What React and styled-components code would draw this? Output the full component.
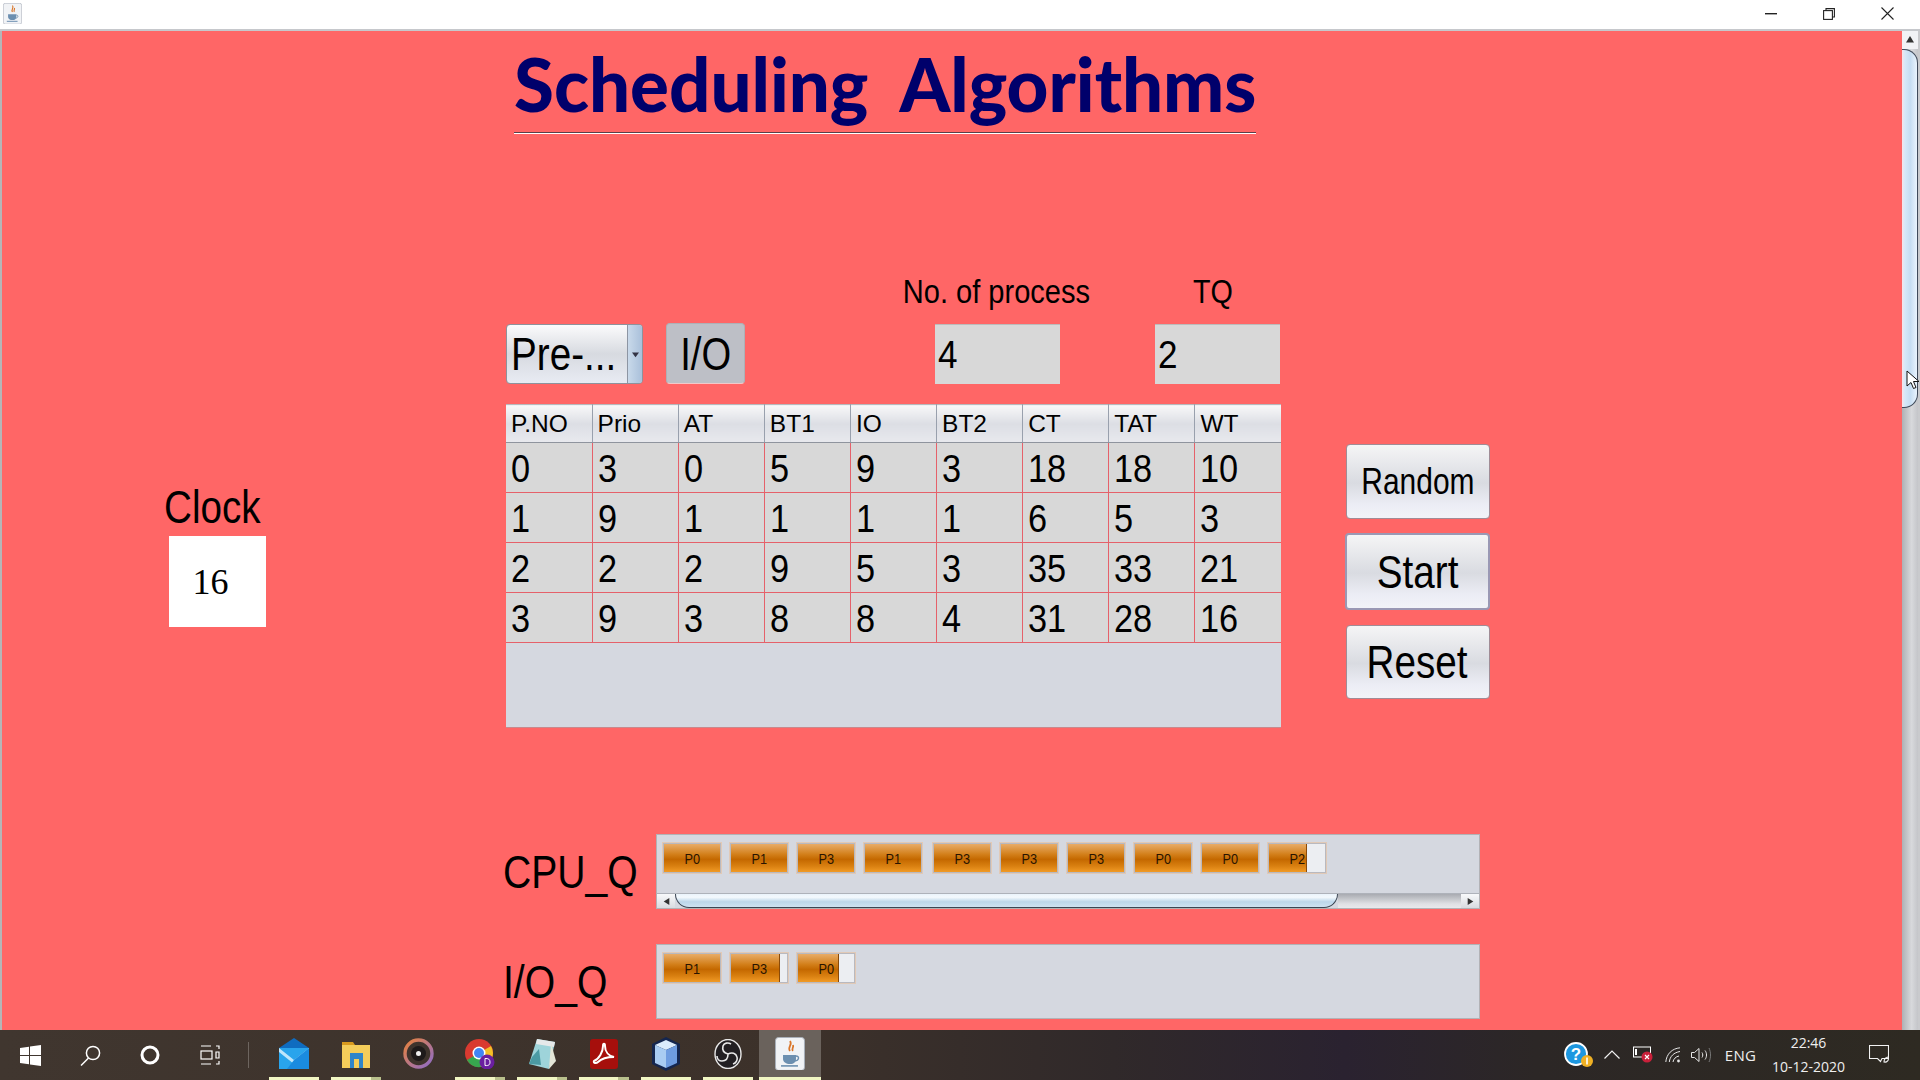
import React from "react";
import styled, { createGlobalStyle } from "styled-components";

const Global = createGlobalStyle`
  html, body { margin: 0; padding: 0; width: 1920px; height: 1080px; overflow: hidden; background: #ff6666; }
  * { box-sizing: border-box; }
  body { font-family: "Liberation Sans", Arial, sans-serif; color: #000; }
`;

const Window = styled.div`
  width: 1920px; height: 1080px; display: flex; flex-direction: column;
`;
const TitleBar = styled.header`
  height: 31px; flex: none; background: #fff; border-bottom: 2px solid #c6c8cc;
  display: flex; align-items: center; padding: 0 0 2px 3px;
`;
const WindowControls = styled.div`
  margin-left: auto; display: flex; align-items: center; padding-right: 26px; gap: 46px;
`;
const Body = styled.div`
  flex: 1; display: flex; min-height: 0; position: relative; border-left: 2px solid #b5b5b8; border-right: 2px solid #c9cacd;
`;
const Canvas = styled.main`
  flex: 1; background: #ff6666; display: flex; flex-direction: column; min-width: 0;
`;

const VBar = styled.div`
  width: 16px; flex: none; display: flex; flex-direction: column;
  background: linear-gradient(90deg, #aeb0b5, #d8d9dc 60%, #c4c5c9);
`;
const VBtn = styled.div`
  height: 18px; background: #f1f2f5; display: flex; align-items: center; justify-content: center;
`;
const VThumb = styled.div`
  height: 359px; border-radius: 0 14px 14px 0; border: 1px solid #3f4a5a; border-left: none;
  background: linear-gradient(90deg, #f7e4ea 0, #d6e8f8 20%, #c6ddf2 55%, #eaf4fd 100%);
`;
const Cursor = styled.svg`
  position: absolute; right: -2px; top: 339px;
`;

const TitleBlock = styled.div`
  margin-left: 512px; width: 742px; height: 103px; padding-top: 10px; flex: none;
  display: flex; flex-direction: column; justify-content: space-between;
`;
const Heading = styled.h1`
  margin: 0; font-family: "Comic Sans MS", Lato, "Open Sans", sans-serif; font-weight: 900; font-size: 74px;
  line-height: 86px; color: #00006b; white-space: pre; word-spacing: -0.5px;
  transform: scaleX(${p => p.$x}); transform-origin: left center;
`;
const TitleRule = styled.div`
  height: 2px; background: linear-gradient(#5a3f48 50%, #fff 50%);
`;

const Stretch = styled.span`
  display: inline-block; white-space: nowrap; font-size: ${p => p.$size}px;
  transform: scaleX(${p => p.$x}); transform-origin: ${p => p.$origin || "left"} center;
`;

const Workspace = styled.section`
  margin-top: 143px; display: flex; flex: none;
`;
const ClockColumn = styled.div`
  width: 504px; flex: none; padding: 205px 0 0 162px;
`;
const ClockLabel = styled.div`
  height: 54px; line-height: 50px;
`;
const ClockFace = styled.div`
  margin-left: 5px; width: 97px; height: 91px; background: #fff; display: flex; align-items: center; justify-content: center;
  padding-right: 14px; font-family: "Liberation Serif", serif; font-size: 36px;
`;
const CenterColumn = styled.div`
  width: 775px; flex: none; display: flex; flex-direction: column;
`;
const Controls = styled.div`
  display: flex; align-items: flex-end; height: 107px;
`;
const Combo = styled.div`
  width: 137px; height: 60px; border-radius: 4px; border: 1px solid #8d929c; display: flex; overflow: hidden;
  background: linear-gradient(#fbfbfc 0, #d7dae0 50%, #e8ebf3 100%);
`;
const ComboValue = styled.div`
  width: 120px; flex: none; padding-left: 4px; line-height: 58px;
`;
const ComboArrow = styled.div`
  width: 15px; flex: none; border-left: 1px solid #8d95a3; display: flex; align-items: center; justify-content: center;
  background: linear-gradient(90deg, #c9d9ea, #a9c0da);
`;
const ToggleButton = styled.div`
  margin-left: 23px; width: 79px; height: 61px; border-radius: 4px; background: #bdbfc6; border: 1px solid #aeb0b6;
  border-bottom-color: #f3c8c8; display: flex; align-items: center; justify-content: center;
`;
const FieldGroup = styled.div`
  width: 125px; margin-left: ${p => p.$gap}px; display: flex; flex-direction: column; align-items: center;
`;
const FieldLabel = styled.div`
  height: 47px; line-height: 30px; white-space: nowrap; padding-right: ${p => p.$nudge || 0}px;
`;
const Field = styled.div`
  width: 125px; height: 60px; background: #d8d8d8; border-top: 1px solid #bbb; padding-left: 3px; line-height: 60px;
`;

const TableWrap = styled.div`
  margin-top: 20px; height: 324px; background: #d5d8e0; border-bottom: 1px solid #c9888c;
`;
const Grid = styled.table`
  width: 775px; table-layout: fixed; border-collapse: collapse;
`;
const Head = styled.th`
  height: 38px; padding: 0 0 0 5px; text-align: left; font-weight: 400; font-size: 24.5px; border-right: 1px solid #99a0ad;
  border-bottom: 1px solid #8f949e; border-top: 1px solid #b7b9bd;
  background: linear-gradient(#f8f8f9 0, #dcdee4 50%, #e8e9ee 100%);
  &:last-child { border-right: none; }
`;
const Cell = styled.td`
  height: 50px; padding: 2px 0 0 5px; background: #d8d8d8; border-right: 1px solid #e5616a; border-bottom: 1px solid #e5616a;
  &:last-child { border-right: none; }
`;

const ButtonColumn = styled.div`
  margin-left: 64px; width: 145px; padding-top: 167px; display: flex; flex-direction: column; align-items: center;
`;
const Action = styled.div`
  width: ${p => (p.$focus ? 145 : 144)}px; height: ${p => p.$h}px; margin-top: ${p => p.$top}px; border-radius: 4px;
  border: ${p => (p.$focus ? "2px solid #9a98b4" : "1px solid #a08c96")};
  background: linear-gradient(#f5f5f6 0, #d9dbe1 52%, #ecedf5 82%, #f2f3f8 100%);
  display: flex; align-items: center; justify-content: center;
`;

const QueueRow = styled.section`
  display: flex; align-items: center; margin: ${p => p.$top}px 0 0 503px; flex: none;
`;
const QueueLabel = styled.div`
  width: 151px; flex: none; margin-left: -2px; margin-right: 2px;
`;
const QueuePanel = styled.div`
  width: 824px; height: 75px; background: #d5d8e0; border: 1px solid #b2b2b6; display: flex; flex-direction: column;
`;
const ChipRow = styled.div`
  flex: 1; display: flex; gap: 9px; padding: 8px 0 0 6px;
`;
const Chip = styled.div`
  position: relative; width: 58px; height: 30px; margin-left: ${p => p.$shift || 0}px;
  background: #eceef2; border: 1px solid #b9b9bf; box-shadow: 0 0 0 1px rgba(240,185,130,.45);
  display: flex; align-items: center; justify-content: center; overflow: hidden;
`;
const ChipFill = styled.div`
  position: absolute; inset: -1px auto -1px -1px;
  border: 1px solid #8a4a08;
  background: linear-gradient(#e8ac68 0, #d27e18 38%, #c46800 55%, #d87f10 78%, #f19a25 100%);
`;
const ChipText = styled.span`
  position: relative; font-size: 15px; color: #2a1400; display: inline-block; transform: scaleX(.85);
`;
const HBar = styled.div`
  height: 15px; display: flex; flex: none; border-top: 1px solid #aeb2ba;
`;
const HBtn = styled.div`
  width: 18px; flex: none; background: linear-gradient(#f8f9fb, #d8dbe0); display: flex; align-items: center; justify-content: center;
`;
const HThumb = styled.div`
  width: 663px; flex: none; border-radius: 0 0 14px 14px; border: 1px solid #3b4653; border-top: none;
  background: linear-gradient(#eaf3fb 0, #f4f9fd 25%, #bcd6ea 60%, #cfe2f1 100%);
`;
const HTrack = styled.div`
  flex: 1; background: linear-gradient(#a9abb1, #dfe0e4 70%, #e8e9ec);
`;

const Taskbar = styled.footer`
  height: 50px; flex: none; display: flex; align-items: stretch; color: #f2f2f2;
  background: linear-gradient(90deg, #40362f 0, #3c312a 42%, #30292a 58%, #2a2230 70%, #2c2726 80%, #2e2a22 100%);
`;
const SystemSlot = styled.div`
  width: 60px; flex: none; display: flex; align-items: center; justify-content: center;
`;
const Divider = styled.div`
  width: 1px; height: 26px; margin: 12px 14px 0 8px; background: #6d655f; flex: none;
`;
const AppSlot = styled.div`
  width: 62px; flex: none; display: flex; flex-direction: column; background: ${p => (p.$active ? "#6a625c" : "transparent")};
`;
const AppIcon = styled.div`
  flex: 1; display: flex; align-items: center; justify-content: center;
`;
const Indicator = styled.div`
  height: 3px; margin: ${p => (p.$active ? "0" : "0 6px")};
  background: ${p => (p.$open
    ? p.$stacked ? "linear-gradient(90deg, #f1f6c3 79%, #b9c08c 79%)" : "#f1f6c3"
    : "transparent")};
`;
const Tray = styled.div`
  margin-left: auto; padding: 0 31px 1px 0; display: flex; align-items: center;
`;
const TrayItem = styled.div`
  margin-left: ${p => p.$gap}px; display: flex; align-items: center; font-family: "Open Sans", sans-serif;
`;
const TrayText = styled.span`
  font-size: 15px; letter-spacing: .2px; color: #efefef; white-space: nowrap;
`;
const DateTime = styled.div`
  width: 75px; font-family: "Open Sans", sans-serif; font-size: 14px; line-height: 24px; text-align: center; color: #efefef; white-space: nowrap;
`;

const CoffeeTile = ({ size = 18 }) => (
  <svg width={size} height={size * 1.13} viewBox="0 0 30 34">
    <rect x="0.5" y="0.5" width="29" height="33" rx="3" fill="#f1f3f6" stroke="#a9b0ba" />
    <path d="M15 4c3 4-3 6 0 10M18 8c1 3-2 4 0 6" fill="none" stroke="#d9762a" strokeWidth="1.8" />
    <path d="M8 18h13v4c0 3-2 5-6 5s-7-2-7-5z" fill="#6c8fb0" />
    <path d="M21 19c4 0 3 5-1 5" fill="none" stroke="#6c8fb0" strokeWidth="1.4" />
    <path d="M6 29h17" stroke="#6c8fb0" strokeWidth="1.6" />
  </svg>
);
const Triangle = ({ dir, size = 5, color = "#333" }) => {
  const pts = { up: "0,8 5,0 10,8", down: "0,2 5,9 10,2", left: "9,0 9,10 1,5", right: "1,0 1,10 9,5" }[dir];
  return <svg width={size * 2} height={size * 2} viewBox="0 0 10 10"><polygon points={pts} fill={color} /></svg>;
};
const Minimize = () => <svg width="12" height="2"><rect width="12" height="1.4" fill="#222" /></svg>;
const Restore = () => (
  <svg width="12" height="12" viewBox="0 0 12 12" fill="none" stroke="#222" strokeWidth="1.1">
    <rect x="0.6" y="2.6" width="8.8" height="8.8" /><path d="M3 2.6V.6h8.4v8.4H9.4" />
  </svg>
);
const CloseX = () => (
  <svg width="13" height="13" viewBox="0 0 13 13" stroke="#222" strokeWidth="1.1"><path d="M.5.5l12 12M12.5.5l-12 12" /></svg>
);
const Win = () => (
  <svg width="21" height="21" viewBox="0 0 21 21" fill="#fff">
    <polygon points="0,3 9,1.7 9,10 0,10" /><polygon points="10,1.5 21,0 21,10 10,10" />
    <polygon points="0,11 9,11 9,19.3 0,18" /><polygon points="10,11 21,11 21,21 10,19.5" />
  </svg>
);
const Search = () => (
  <svg width="21" height="21" viewBox="0 0 21 21" fill="none" stroke="#fff" strokeWidth="1.5">
    <circle cx="13" cy="8" r="6.6" /><path d="M8.5 13L1 20.5" />
  </svg>
);
const Cortana = () => <svg width="20" height="20"><circle cx="10" cy="10" r="8" fill="none" stroke="#fff" strokeWidth="3" /></svg>;
const TaskView = () => (
  <svg width="20" height="20" viewBox="0 0 20 20" fill="none" stroke="#fff" strokeWidth="1.2">
    <path d="M1 1h10M1 19h10" /><rect x="1" y="6" width="11" height="8" />
    <path d="M16 1h3v3M16 19h3v-3M16 7h3v6h-3z" />
  </svg>
);
const Mail = () => (
  <svg width="30" height="31" viewBox="0 0 30 31">
    <polygon points="0,10 15,0 30,10 15,20" fill="#0f6cc0" />
    <rect x="0" y="10" width="30" height="21" fill="#29a4ec" />
    <polygon points="0,10 15,22 30,10 30,14 15,26 0,14" fill="#bfe6fb" />
    <polygon points="15,22 30,10 30,31 8,31" fill="#1a8be0" />
  </svg>
);
const Folder = () => (
  <svg width="28" height="30" viewBox="0 0 28 30">
    <path d="M0 3h11l2 3H0z" fill="#d89a1e" /><rect y="6" width="28" height="23" fill="#f4cd5a" />
    <rect x="8" y="14" width="13" height="15" fill="#2f85c9" /><rect x="12" y="20" width="5" height="9" fill="#f4cd5a" />
  </svg>
);
const Groove = () => (
  <svg width="31" height="31" viewBox="0 0 31 31">
    <defs><linearGradient id="gr" x1="0" y1="0" x2="1" y2="1"><stop offset="0" stopColor="#e8823c" /><stop offset="1" stopColor="#8d6cc9" /></linearGradient></defs>
    <circle cx="15.5" cy="15.5" r="13.5" fill="none" stroke="url(#gr)" strokeWidth="3.4" />
    <circle cx="15.5" cy="15.5" r="7.5" fill="#1e1a1a" /><circle cx="15.5" cy="15.5" r="2.5" fill="#eee" />
  </svg>
);
const Chrome = () => (
  <svg width="30" height="30" viewBox="0 0 30 30">
    <circle cx="14" cy="14" r="14" fill="#d93a30" />
    <path d="M14 14L2 21a14 14 0 0 0 14 7z" fill="#37a64e" />
    <path d="M14 14l12-7a14 14 0 0 1-10 21z" fill="#f4c026" />
    <circle cx="14" cy="14" r="6.5" fill="#fff" /><circle cx="14" cy="14" r="5" fill="#4285f4" />
    <circle cx="22" cy="23" r="7.5" fill="#6a1fa0" />
    <path d="M20 19.5v7c4 .4 5-1 5-3.5s-1.5-3.800-5-3.500z" fill="none" stroke="#fff" strokeWidth="1" />
  </svg>
);
const Notes = () => (
  <svg width="27" height="30" viewBox="0 0 27 30">
    <polygon points="8,0 26,3 20,30 0,25" fill="#9ed4da" />
    <polygon points="8,0 26,3 25,8 7,5" fill="#e6e9ea" />
    <polygon points="22,4 27,22 20,30" fill="#e4e6d8" />
    <polygon points="3,18 10,10 12,26 0,25" fill="#4b9aa3" />
  </svg>
);
const Acrobat = () => (
  <svg width="28" height="30" viewBox="0 0 28 30">
    <rect width="28" height="30" rx="3" fill="#a60f0c" />
    <path d="M4 22c5-2 9-9 9-15 0-3 2-3 2 0 0 6 4 10 9 11-5 0-12 1-16 5-2 2-5 1-4-1z" fill="none" stroke="#fff" strokeWidth="2" />
  </svg>
);
const Cube = () => (
  <svg width="28" height="34" viewBox="0 0 28 34">
    <polygon points="14,0 28,7 28,27 14,34 0,27 0,7" fill="#14264f" />
    <polygon points="14,3 25,8 14,13 3,8" fill="#dcecfb" />
    <polygon points="3,8 14,13 14,31 3,26" fill="#a9ccf2" />
    <polygon points="25,8 14,13 14,31 25,26" fill="#6e9ce0" />
  </svg>
);
const Obs = () => (
  <svg width="28" height="30" viewBox="0 0 28 30" fill="none" stroke="#e8e8e8">
    <ellipse cx="14" cy="15" rx="13" ry="14.5" fill="#221f22" strokeWidth="1.4" />
    <path d="M14 15c-4-1-6-4-5-8 1-3 5-4 8-2M14 15c4-2 8-1 9 3 1 3-1 6-4 7M14 15c0 4-2 7-6 7-3 0-5-2-5-5" strokeWidth="1.6" />
  </svg>
);
const Help = () => (
  <svg width="29" height="26" viewBox="0 0 29 26">
    <circle cx="12" cy="12" r="11" fill="#1d97e0" stroke="#fff" strokeWidth="1.8" />
    <text x="12" y="18" textAnchor="middle" fontSize="17" fontWeight="700" fontFamily="Liberation Sans" fill="#fff">?</text>
    <circle cx="23" cy="19" r="6" fill="#efb024" /><rect x="22.2" y="15.5" width="1.6" height="7" fill="#fff" />
  </svg>
);
const Chevron = () => <svg width="16" height="9" viewBox="0 0 16 9" fill="none" stroke="#f2f2f2" strokeWidth="1.2"><path d="M.5 8.5L8 1l7.5 7.5" /></svg>;
const Battery = () => (
  <svg width="20" height="17" viewBox="0 0 20 17">
    <rect x="0.5" y="1" width="17" height="10" fill="none" stroke="#fff" />
    <rect x="2" y="3" width="2" height="6" fill="#fff" />
    <circle cx="14" cy="11" r="5.5" fill="#c9203a" />
    <path d="M12 9l4 4M16 9l-4 4" stroke="#fff" strokeWidth="1.1" />
  </svg>
);
const Wifi = () => (
  <svg width="16" height="16" viewBox="0 0 16 16" fill="none" stroke="#e6e6e6" strokeWidth="1">
    <path d="M.8 15C1.5 7 7 1.5 15 .8M4.3 15c.5-5.5 4.5-9.5 10.7-10.5M8 15c.3-3 3-5.500 6-6" />
    <circle cx="13.5" cy="14" r="1.4" fill="#e6e6e6" stroke="none" />
  </svg>
);
const Speaker = () => (
  <svg width="20" height="16" viewBox="0 0 20 16" fill="none" stroke="#e6e6e6" strokeWidth="1">
    <path d="M.5 5.5h3L8 1.5v13l-4.5-4h-3zM11 5.5c1 1.5 1 3.5 0 5M14 3.5c2 2.5 2 6.5 0 9" />
    <path d="M18 1c2 4 2 10 0 14" stroke="#777" />
  </svg>
);
const Notify = () => (
  <svg width="20" height="20" viewBox="0 0 20 20" fill="none" stroke="#f2f2f2" strokeWidth="1.1">
    <path d="M.5.5h19v13H13l-1.5 3-3-3H.5z" /><path d="M15 17a3.5 3.5 0 0 0 4-5c-2 0-4 2-4 5z" />
  </svg>
);

const headers = ["P.NO", "Prio", "AT", "BT1", "IO", "BT2", "CT", "TAT", "WT"];
const rows = [
  [0, 3, 0, 5, 9, 3, 18, 18, 10],
  [1, 9, 1, 1, 1, 1, 6, 5, 3],
  [2, 2, 2, 9, 5, 3, 35, 33, 21],
  [3, 9, 3, 8, 8, 4, 31, 28, 16],
];
const cpuQueue = [
  ["P0", 100], ["P1", 100], ["P3", 100], ["P1", 100], ["P3", 100, 2], ["P3", 100], ["P3", 100], ["P0", 100], ["P0", 100], ["P2", 66],
];
const ioQueue = [["P1", 100], ["P3", 85], ["P0", 72]];
const apps = [
  { icon: <Mail />, open: true },
  { icon: <Folder />, open: true, stacked: true },
  { icon: <Groove /> },
  { icon: <Chrome />, open: true, stacked: true },
  { icon: <Notes />, open: true, stacked: true },
  { icon: <Acrobat />, open: true, stacked: true },
  { icon: <Cube />, open: true },
  { icon: <Obs />, open: true },
  { icon: <CoffeeTile size={30} />, open: true, active: true },
];

const Chips = ({ items }) => (
  <ChipRow>
    {items.map(([name, fill, shift], i) => (
      <Chip key={i} $shift={shift}>
        <ChipFill style={{ width: `calc(${fill}% + 2px)` }} />
        <ChipText>{name}</ChipText>
      </Chip>
    ))}
  </ChipRow>
);

export default function App() {
  return (
    <Window>
      <Global />
      <TitleBar>
        <CoffeeTile size={19} />
        <WindowControls><Minimize /><Restore /><CloseX /></WindowControls>
      </TitleBar>
      <Body>
        <Canvas>
          <TitleBlock>
            <Heading $x={0.98}>Scheduling  Algorithms</Heading>
            <TitleRule />
          </TitleBlock>
          <Workspace>
            <ClockColumn>
              <ClockLabel><Stretch $size={46} $x={0.84}>Clock</Stretch></ClockLabel>
              <ClockFace>16</ClockFace>
            </ClockColumn>
            <CenterColumn>
              <Controls>
                <Combo>
                  <ComboValue><Stretch $size={46} $x={0.84}>Pre-...</Stretch></ComboValue>
                  <ComboArrow><Triangle dir="down" size={3.5} color="#334" /></ComboArrow>
                </Combo>
                <ToggleButton><Stretch $size={46} $x={0.83} $origin="center">I/O</Stretch></ToggleButton>
                <FieldGroup $gap={190}>
                  <FieldLabel $nudge={2}><Stretch $size={33} $x={0.88} $origin="center">No. of process</Stretch></FieldLabel>
                  <Field><Stretch $size={39} $x={0.9}>4</Stretch></Field>
                </FieldGroup>
                <FieldGroup $gap={95}>
                  <FieldLabel $nudge={9}><Stretch $size={33} $x={0.87} $origin="center">TQ</Stretch></FieldLabel>
                  <Field><Stretch $size={39} $x={0.9}>2</Stretch></Field>
                </FieldGroup>
              </Controls>
              <TableWrap>
                <Grid>
                  <thead>
                    <tr>{headers.map(h => <Head key={h}>{h}</Head>)}</tr>
                  </thead>
                  <tbody>
                    {rows.map((row, r) => (
                      <tr key={r}>
                        {row.map((v, c) => <Cell key={c}><Stretch $size={39} $x={0.88}>{v}</Stretch></Cell>)}
                      </tr>
                    ))}
                  </tbody>
                </Grid>
              </TableWrap>
            </CenterColumn>
            <ButtonColumn>
              <Action $h={75} $top={0}><Stretch $size={37} $x={0.81} $origin="center">Random</Stretch></Action>
              <Action $h={77} $top={14} $focus><Stretch $size={46} $x={0.84} $origin="center">Start</Stretch></Action>
              <Action $h={74} $top={15}><Stretch $size={46} $x={0.84} $origin="center">Reset</Stretch></Action>
            </ButtonColumn>
          </Workspace>
          <QueueRow $top={106}>
            <QueueLabel><Stretch $size={46} $x={0.85}>CPU_Q</Stretch></QueueLabel>
            <QueuePanel>
              <Chips items={cpuQueue} />
              <HBar>
                <HBtn><Triangle dir="left" size={3.5} /></HBtn>
                <HThumb />
                <HTrack />
                <HBtn><Triangle dir="right" size={3.5} /></HBtn>
              </HBar>
            </QueuePanel>
          </QueueRow>
          <QueueRow $top={35}>
            <QueueLabel><Stretch $size={46} $x={0.85}>I/O_Q</Stretch></QueueLabel>
            <QueuePanel><Chips items={ioQueue} /></QueuePanel>
          </QueueRow>
        </Canvas>
        <VBar>
          <VBtn><Triangle dir="up" size={4} /></VBtn>
          <VThumb />
        </VBar>
        <Cursor width="14" height="20" viewBox="0 0 14 20">
          <path d="M1 1v15l4-3.5 2.5 6 2.5-1-2.500-6H13z" fill="#fff" stroke="#111" strokeWidth="1" />
        </Cursor>
      </Body>
      <Taskbar>
        <SystemSlot><Win /></SystemSlot>
        <SystemSlot><Search /></SystemSlot>
        <SystemSlot><Cortana /></SystemSlot>
        <SystemSlot><TaskView /></SystemSlot>
        <Divider />
        {apps.map((a, i) => (
          <AppSlot key={i} $active={a.active}>
            <AppIcon>{a.icon}</AppIcon>
            <Indicator $open={a.open} $stacked={a.stacked} $active={a.active} />
          </AppSlot>
        ))}
        <Tray>
          <TrayItem $gap={0}><Help /></TrayItem>
          <TrayItem $gap={11}><Chevron /></TrayItem>
          <TrayItem $gap={13}><Battery /></TrayItem>
          <TrayItem $gap={12}><Wifi /></TrayItem>
          <TrayItem $gap={10}><Speaker /></TrayItem>
          <TrayItem $gap={14}><TrayText>ENG</TrayText></TrayItem>
          <TrayItem $gap={15}><DateTime>22:46<br />10-12-2020</DateTime></TrayItem>
          <TrayItem $gap={23}><Notify /></TrayItem>
        </Tray>
      </Taskbar>
    </Window>
  );
}
